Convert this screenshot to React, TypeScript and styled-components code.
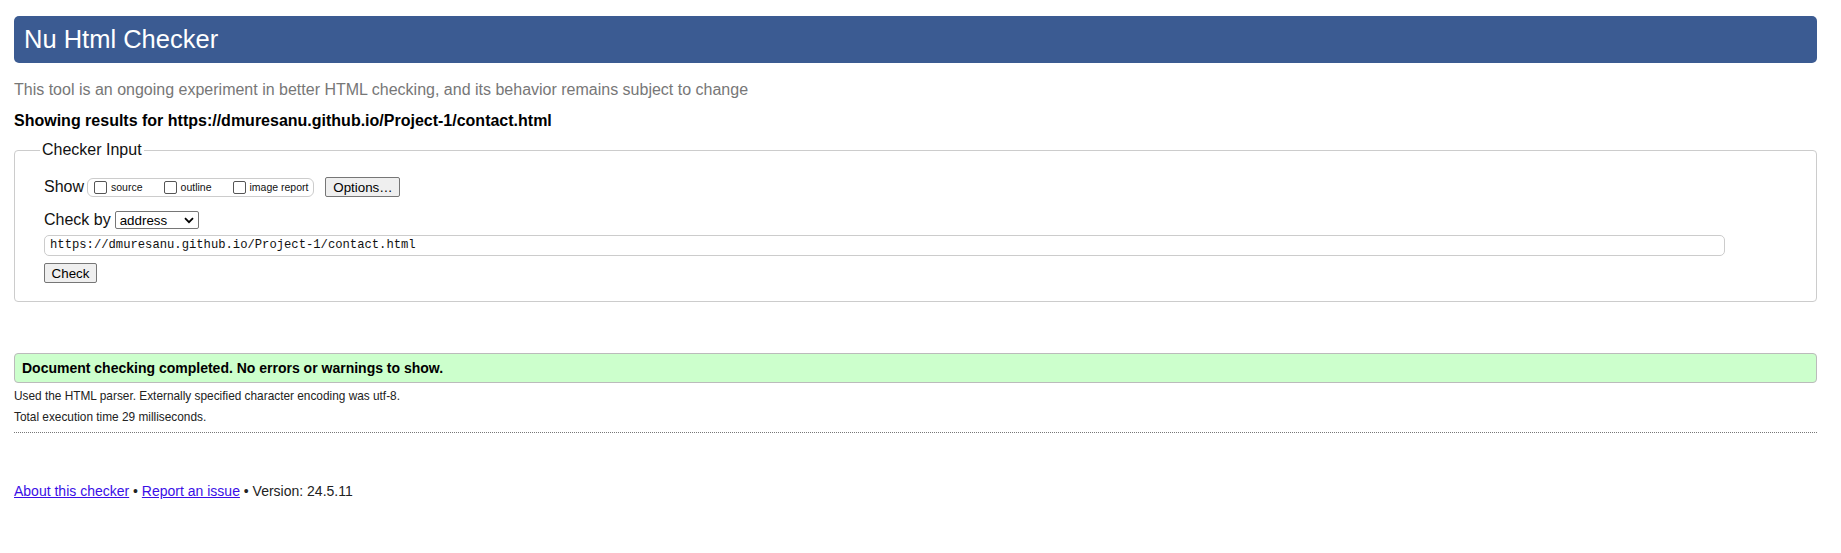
import React from "react";
import styled, { createGlobalStyle } from "styled-components";

const Global = createGlobalStyle`
  html, body { margin: 0; padding: 0; background: #fff; }
  body { font-family: "Liberation Sans", Arial, sans-serif; color: #000; }
`;

const Page = styled.div`
  padding: 16px 24px 0 14px;
  font-family: "Liberation Sans", Arial, sans-serif;
`;

const Header = styled.h1`
  margin: 0;
  height: 47px;
  box-sizing: border-box;
  background: #3b5b92;
  color: #fff;
  border-radius: 5px;
  font-weight: normal;
  font-size: 25.5px;
  line-height: 47px;
  padding-left: 10px;
`;

const Intro = styled.p`
  margin: 17px 0 0 0;
  color: #777;
  font-size: 16px;
  line-height: 20px;
`;

const Showing = styled.p`
  margin: 11px 0 0 0;
  font-weight: bold;
  font-size: 16px;
  line-height: 20px;
`;

const Fieldset = styled.fieldset`
  margin: 10px 0 0 0;
  border: 1px solid #ccc;
  border-radius: 4px;
  padding: 18px 29px 18px 29px;
  min-width: 0;
`;

const Legend = styled.legend`
  font-size: 16px;
  padding: 0 2px;
  margin-left: -4px;
  color: #111;
`;

const Row = styled.div<{ $mt?: number }>`
  display: flex;
  align-items: center;
  margin-top: ${(p) => p.$mt ?? 0}px;
`;

const RowLabel = styled.span`
  font-size: 16px;
  color: #111;
  margin-right: 2px;
`;

const ToggleGroup = styled.span`
  display: inline-flex;
  align-items: center;
  height: 19px;
  box-sizing: border-box;
  border: 1px solid #ccc;
  border-radius: 6px;
  padding: 0 5px 0 6px;
  gap: 21px;
  margin-left: 1px;
`;

const Toggle = styled.label`
  display: inline-flex;
  align-items: center;
  font-size: 10.5px;
  color: #111;
`;

const Box = styled.span`
  width: 11px;
  height: 11px;
  border: 1px solid #555;
  border-radius: 2px;
  background: #fff;
  margin-right: 4px;
  display: inline-block;
`;

const Button = styled.button<{ $w: number }>`
  height: 20px;
  width: ${(p) => p.$w}px;
  box-sizing: border-box;
  padding: 0;
  border: 1px solid #767676;
  border-radius: 2px;
  background: #efefef;
  font-family: "Liberation Sans", Arial, sans-serif;
  font-size: 13.33px;
  color: #000;
  margin-left: 11px;
`;

const CheckButton = styled(Button)`
  margin-left: 0;
`;

const Select = styled.span`
  display: inline-flex;
  align-items: center;
  justify-content: space-between;
  width: 84px;
  height: 18px;
  box-sizing: border-box;
  border: 1px solid #767676;
  border-radius: 2px;
  padding: 0 4px 0 4px;
  font-size: 13.33px;
  color: #000;
  margin-left: 2px;
`;

const UrlBlock = styled.div`
  margin-top: 6px;
`;

const UrlInput = styled.div`
  height: 21px;
  box-sizing: border-box;
  border: 1px solid #ccc;
  border-radius: 5px;
  font-family: "Liberation Mono", "DejaVu Sans Mono", monospace;
  font-size: 12.2px;
  line-height: 19px;
  padding-left: 5px;
  margin-right: 62px;
  color: #111;
`;

const Success = styled.div`
  margin-top: 51px;
  height: 30px;
  box-sizing: border-box;
  background: #ccffcc;
  border: 1px solid #bbb;
  border-radius: 4px;
  font-weight: bold;
  font-size: 14px;
  line-height: 28px;
  padding-left: 7px;
`;

const Detail = styled.p<{ $mt: number }>`
  margin: ${(p) => p.$mt}px 0 0 0;
  font-size: 11.85px;
  line-height: 14px;
  color: #222;
`;

const Divider = styled.hr`
  margin: 8px 0 0 0;
  border: 0;
  border-top: 1px dotted #777;
  height: 0;
`;

const Footer = styled.p`
  margin: 50px 0 0 0;
  font-size: 14px;
  line-height: 16px;
  color: #222;
`;

const Link = styled.a`
  color: #3a0ee6;
  text-decoration: underline;
`;

const Chevron = () => (
  <svg width="10" height="7" viewBox="0 0 10 7">
    <path d="M1 1.2 L5 5.2 L9 1.2" fill="none" stroke="#000" strokeWidth="1.8" />
  </svg>
);

export default function App() {
  return (
    <>
      <Global />
      <Page>
        <Header>Nu Html Checker</Header>
        <Intro>
          This tool is an ongoing experiment in better HTML checking, and its behavior remains subject to change
        </Intro>
        <Showing>Showing results for https://dmuresanu.github.io/Project-1/contact.html</Showing>
        <Fieldset>
          <Legend>Checker Input</Legend>
          <Row>
            <RowLabel>Show</RowLabel>
            <ToggleGroup>
              <Toggle>
                <Box />
                source
              </Toggle>
              <Toggle>
                <Box />
                outline
              </Toggle>
              <Toggle>
                <Box />
                image report
              </Toggle>
            </ToggleGroup>
            <Button $w={75}>Options…</Button>
          </Row>
          <Row $mt={14}>
            <RowLabel>Check by</RowLabel>
            <Select>
              address
              <Chevron />
            </Select>
          </Row>
          <UrlBlock>
            <UrlInput>https://dmuresanu.github.io/Project-1/contact.html</UrlInput>
          </UrlBlock>
          <Row $mt={7}>
            <CheckButton $w={53}>Check</CheckButton>
          </Row>
        </Fieldset>
        <Success>Document checking completed. No errors or warnings to show.</Success>
        <Detail $mt={6}>Used the HTML parser. Externally specified character encoding was utf-8.</Detail>
        <Detail $mt={7}>Total execution time 29 milliseconds.</Detail>
        <Divider />
        <Footer>
          <Link href="#">About this checker</Link> • <Link href="#">Report an issue</Link> • Version: 24.5.11
        </Footer>
      </Page>
    </>
  );
}
